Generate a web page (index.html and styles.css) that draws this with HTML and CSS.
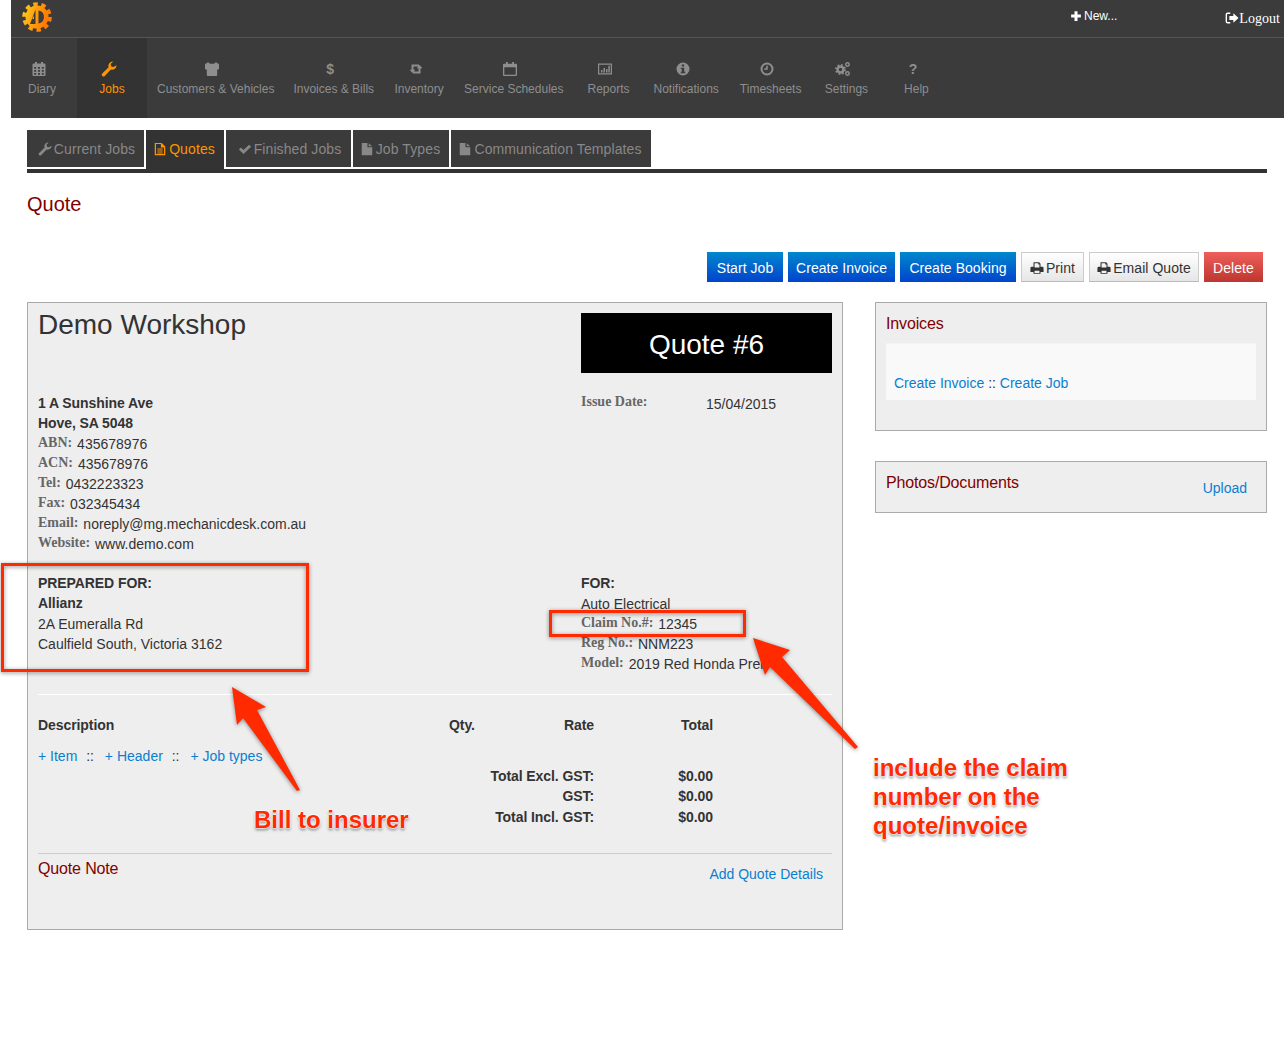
FILE: index.html
```html
<!DOCTYPE html>
<html>
  <head>
    <title>Quote #6</title>
    <meta charset="UTF-8">
    <meta name="viewport" content="width=device-width, initial-scale=1.0">
    <link rel="stylesheet" href="styles.css">
  </head>
  <body>
    <svg class="defs" width="0" height="0">
      <defs>
        <linearGradient id="logo-grad" x1="0" y1="0" x2="1" y2="0.3">
          <stop offset="0" stop-color="#ffc61a"/>
          <stop offset="1" stop-color="#ff7a00"/>
        </linearGradient>
        <symbol id="i-calendar" viewBox="0 0 16 16"><path fill="currentColor" fill-rule="evenodd" d="M4 1h2v1.500h4V1h2v1.500h1.500a1 1 0 0 1 1 1V14a1 1 0 0 1-1 1h-11a1 1 0 0 1-1-1V3.500a1 1 0 0 1 1-1H4zM3.200 6v1.800h2V6zm3.800 0v1.800h2V6zm3.800 0v1.800h2V6zM3.200 9v1.800h2V9zm3.800 0v1.800h2V9zm3.800 0v1.800h2V9zM3.200 12v1.800h2V12zm3.800 0v1.800h2V12zm3.800 0v1.800h2V12z"/></symbol>
        <symbol id="i-wrench" viewBox="0 0 16 16"><path fill="currentColor" d="M15.500 4.200a4.300 4.300 0 0 1-5.600 4.300L3.800 14.900a1.700 1.700 0 0 1-2.500-2.400L7.600 6.200A4.300 4.300 0 0 1 12.200.6L9.700 3.100l.6 2.300 2.300.6z"/></symbol>
        <symbol id="i-users" viewBox="0 0 16 16"><path fill="currentColor" d="M3.500 1.500a2 2 0 0 1 2.300 1.200h4.400a2 2 0 0 1 2.300-1.200l2.500 1.700V8l-1.800.8V14a1 1 0 0 1-1 1H3.800a1 1 0 0 1-1-1V8.800L1 8V3.200z"/></symbol>
        <symbol id="i-retweet" viewBox="0 0 16 16"><path fill="currentColor" d="M3.500 3.500H11v2H5.500v3.200h1.800L4.500 12 1.500 8.700h2zM12.500 12.500H5v-2h5.500V7.300H8.700L11.500 4l3 3.300h-2z"/></symbol>
        <symbol id="i-schedule" viewBox="0 0 16 16"><path fill="currentColor" fill-rule="evenodd" d="M4 1h1.800v1.800h4.400V1H12v1.800h2a1 1 0 0 1 1 1V14a1 1 0 0 1-1 1H2a1 1 0 0 1-1-1V3.800a1 1 0 0 1 1-1h2zM2.300 6.300v7.400h11.400V6.300z"/></symbol>
        <symbol id="i-chart" viewBox="0 0 16 16"><path fill="currentColor" fill-rule="evenodd" d="M1 2.500h14v11H1zm1.200 1.200v8.600h11.600V3.700zM4 9h1.500v2.500H4zm2.500-2H8v4.500H6.500zM9 8h1.500v3.500H9zm2.300-3.300h1.500v6.800h-1.500z"/></symbol>
        <symbol id="i-info" viewBox="0 0 16 16"><path fill="currentColor" fill-rule="evenodd" d="M8 1.500a6.500 6.500 0 1 1 0 13 6.500 6.500 0 0 1 0-13zM6.800 3.500v2h2.400v-2zM5.800 6.700v1.400h1v2.700h-1v1.500h4.400v-1.500h-1V6.700z"/></symbol>
        <symbol id="i-clock" viewBox="0 0 16 16"><path fill="currentColor" fill-rule="evenodd" d="M8 1.500a6.500 6.500 0 1 1 0 13 6.500 6.500 0 0 1 0-13zm0 2a4.500 4.500 0 1 0 0 9 4.500 4.500 0 0 0 0-9zM7.200 4.800h1.600v3.900H5.200V7.300h2z"/></symbol>
        <symbol id="i-cogs" viewBox="0 0 16 16"><g fill="none" stroke="currentColor"><circle cx="5.500" cy="8.500" r="3" stroke-width="2.500"/><circle cx="5.500" cy="8.500" r="4.700" stroke-width="1.500" stroke-dasharray="1.800 1.900"/><circle cx="12.500" cy="3.500" r="1.700" stroke-width="1.500"/><circle cx="12.500" cy="12.500" r="1.700" stroke-width="1.500"/></g></symbol>
        <symbol id="i-quote" viewBox="0 0 16 16"><path fill="currentColor" fill-rule="evenodd" d="M2 1h8l4 4v10H2zm1.400 1.400v11.200h9.200V6.200H9V2.400zM5 7.500h6v1.200H5zm0 2.200h6v1.200H5zm0 2.200h6v1.200H5z"/></symbol>
        <symbol id="i-check" viewBox="0 0 16 16"><path fill="currentColor" d="M1 8.500l2.300-2.300 3 3L12.700 3 15 5.300l-8.700 8.500z"/></symbol>
        <symbol id="i-file" viewBox="0 0 16 16"><path fill="currentColor" d="M2 1h6.500v5H14v9H2zm8 .3L13.700 4.800H10z"/></symbol>
        <symbol id="i-plus" viewBox="0 0 16 16"><path fill="currentColor" d="M6 1.500h4V6h4.500v4H10v4.500H6V10H1.500V6H6z"/></symbol>
        <symbol id="i-logout" viewBox="0 0 16 16"><path fill="none" stroke="currentColor" stroke-width="1.600" d="M6 2.500H3a1.500 1.500 0 0 0-1.500 1.500v8A1.500 1.500 0 0 0 3 13.500h3"/><path fill="currentColor" d="M5 5.800h4.500V2.500L15.500 8l-6 5.500v-3.300H5z"/></symbol>
        <symbol id="i-print" viewBox="0 0 16 16"><path fill="currentColor" fill-rule="evenodd" d="M4 1.500h6.500L12 3v3.500h2a1.500 1.500 0 0 1 1.500 1.500v4.500H12v2H4v-2H.5V8A1.500 1.500 0 0 1 2 6.500h2zm1.200 1.200v4.800h5.600V4H9.500V2.700zm0 8.300v2.800h5.600V11z"/></symbol>
      </defs>
    </svg>

    <header class="topbar">
      <div class="topbar-row">
        <svg class="logo" width="30" height="30" viewBox="0 0 30 30">
          <circle cx="15" cy="15" r="12.800" fill="none" stroke="url(#logo-grad)" stroke-width="4" stroke-dasharray="4.400 3.640"/>
          <circle cx="15" cy="15" r="11.500" fill="url(#logo-grad)"/>
          <path fill="#3b3b3b" fill-rule="evenodd" d="M13.500 7.500L8 22h5.500zM12 13.500v3.500h-1.800z"/>
          <path fill="#3b3b3b" d="M16.500 8.500a6.600 6.600 0 0 1 0 13z"/>
        </svg>
        <a class="top-new"><svg class="icon"><use href="#i-plus"/></svg>New...</a>
        <a class="top-logout"><svg class="icon"><use href="#i-logout"/></svg>Logout</a>
      </div>
      <nav class="mainnav">
        <a class="navitem first"><svg class="nav-icon"><use href="#i-calendar"/></svg><span>Diary</span></a>
        <a class="navitem active"><svg class="nav-icon"><use href="#i-wrench"/></svg><span>Jobs</span></a>
        <a class="navitem tight"><svg class="nav-icon"><use href="#i-users"/></svg><span>Customers &amp; Vehicles</span></a>
        <a class="navitem"><b class="nav-glyph">$</b><span>Invoices &amp; Bills</span></a>
        <a class="navitem"><svg class="nav-icon"><use href="#i-retweet"/></svg><span>Inventory</span></a>
        <a class="navitem"><svg class="nav-icon"><use href="#i-schedule"/></svg><span>Service Schedules</span></a>
        <a class="navitem"><svg class="nav-icon"><use href="#i-chart"/></svg><span>Reports</span></a>
        <a class="navitem wide"><svg class="nav-icon"><use href="#i-info"/></svg><span>Notifications</span></a>
        <a class="navitem"><svg class="nav-icon"><use href="#i-clock"/></svg><span>Timesheets</span></a>
        <a class="navitem"><svg class="nav-icon"><use href="#i-cogs"/></svg><span>Settings</span></a>
        <a class="navitem"><b class="nav-glyph">?</b><span>Help</span></a>
      </nav>
    </header>

    <main class="page">
      <div class="tabs">
        <a class="tab tab-1"><svg class="icon"><use href="#i-wrench"/></svg>Current Jobs</a>
        <a class="tab tab-2 active"><svg class="icon"><use href="#i-quote"/></svg>Quotes</a>
        <a class="tab tab-3"><svg class="icon"><use href="#i-check"/></svg>Finished Jobs</a>
        <a class="tab tab-4"><svg class="icon"><use href="#i-file"/></svg>Job Types</a>
        <a class="tab tab-5"><svg class="icon"><use href="#i-file"/></svg>Communication Templates</a>
      </div>

      <h2 class="page-title">Quote</h2>

      <div class="actions">
        <a class="btn btn-primary">Start Job</a>
        <a class="btn btn-primary">Create Invoice</a>
        <a class="btn btn-primary">Create Booking</a>
        <a class="btn"><svg class="icon"><use href="#i-print"/></svg>Print</a>
        <a class="btn"><svg class="icon"><use href="#i-print"/></svg>Email Quote</a>
        <a class="btn btn-danger">Delete</a>
      </div>

      <div class="columns">
        <section class="quote">
          <div class="quote-head">
            <h1 class="workshop">Demo Workshop</h1>
            <div class="quote-number">Quote #6</div>
          </div>

          <div class="quote-info">
            <div class="lines">
              <div class="strong">1 A Sunshine Ave</div>
              <div class="strong">Hove, SA 5048</div>
              <div><span class="lbl">ABN:</span> 435678976</div>
              <div><span class="lbl">ACN:</span> 435678976</div>
              <div><span class="lbl">Tel:</span> 0432223323</div>
              <div><span class="lbl">Fax:</span> 032345434</div>
              <div><span class="lbl">Email:</span> noreply@mg.mechanicdesk.com.au</div>
              <div><span class="lbl">Website:</span> www.demo.com</div>
            </div>
            <div class="lines">
              <div class="issue"><span class="lbl">Issue Date:</span><span>15/04/2015</span></div>
            </div>
          </div>

          <div class="quote-parties">
            <div class="lines">
              <div class="strong">PREPARED FOR:</div>
              <div class="strong">Allianz</div>
              <div>2A Eumeralla Rd</div>
              <div>Caulfield South, Victoria 3162</div>
            </div>
            <div class="lines">
              <div class="strong">FOR:</div>
              <div>Auto Electrical</div>
              <div><span class="lbl">Claim No.#:</span> 12345</div>
              <div><span class="lbl">Reg No.:</span> NNM223</div>
              <div><span class="lbl">Model:</span> 2019 Red Honda Prel</div>
            </div>
          </div>

          <div class="items">
            <div class="strong">Description</div>
            <div class="strong">Qty.</div>
            <div class="strong num">Rate</div>
            <div class="strong num">Total</div>
            <div class="add-links"><a>+ Item</a> <i>::</i> <a>+ Header</a> <i>::</i> <a>+ Job types</a></div>
            <div class="strong num sum-label">Total Excl. GST:</div>
            <div class="strong num">$0.00</div>
            <div class="strong num sum-label">GST:</div>
            <div class="strong num">$0.00</div>
            <div class="strong num sum-label sum-last">Total Incl. GST:</div>
            <div class="strong num sum-last">$0.00</div>
          </div>

          <div class="quote-note">
            <h3 class="panel-title">Quote Note</h3>
            <a class="note-link">Add Quote Details</a>
          </div>
        </section>

        <aside class="side">
          <section class="panel invoices">
            <h3 class="panel-title">Invoices</h3>
            <div class="panel-body"><a>Create Invoice</a> :: <a>Create Job</a></div>
          </section>
          <section class="panel photos">
            <h3 class="panel-title">Photos/Documents</h3>
            <a class="upload">Upload</a>
          </section>
        </aside>
      </div>
    </main>

    <svg class="marks" width="1284" height="1054" viewBox="0 0 1284 1054">
      <rect x="2.500" y="564.500" width="305" height="106" fill="none" stroke="#ff2a00" stroke-width="3"/>
      <rect x="550.500" y="611.500" width="194" height="24" fill="none" stroke="#ff2a00" stroke-width="3"/>
      <path fill="#ff2a00" d="M232 687L266 707 257 710 300 790 297 791 243 718 237 725z"/>
      <path fill="#ff2a00" d="M753 638L790 650 782 657 858 747 855 749 770 667 765 675z"/>
    </svg>
    <div class="note note-bill">Bill to insurer</div>
    <div class="note note-claim">include the claim<br>number on the<br>quote/invoice</div>
  </body>
</html>
```

FILE: styles.css
```css
* {
  box-sizing: border-box;
  margin: 0;
  padding: 0;
}

body {
  position: relative;
  width: 1284px;
  height: 1054px;
  overflow: hidden;
  font-family: "Liberation Sans", Arial, sans-serif;
  font-size: 14px;
  line-height: 20px;
  color: #333;
  background-color: #fff;
}

.defs {
  position: absolute;
}

.icon {
  width: 14px;
  height: 14px;
  margin-right: 2px;
  vertical-align: -2px;
}

/* top bar */
.topbar {
  margin-left: 11px;
  height: 118px;
  background-color: #3b3b3b;
}

.topbar-row {
  position: relative;
  display: flex;
  height: 38px;
  padding-left: 11px;
  border-bottom: 1px solid #555;
}

.logo {
  margin-top: 2px;
}

.top-new {
  margin-left: 1018px;
  font-size: 12px;
  line-height: 33px;
  color: #fff;
  white-space: nowrap;
}

.top-new .icon {
  width: 12px;
  height: 12px;
  vertical-align: -2px;
}

.top-logout {
  margin-left: 108px;
  font-family: "Liberation Serif", serif;
  font-size: 14px;
  line-height: 38px;
  color: #fff;
  white-space: nowrap;
}

.top-logout .icon {
  width: 14px;
  height: 14px;
  margin-right: 0;
}

.mainnav {
  display: flex;
  height: 80px;
}

.navitem {
  display: flex;
  flex-direction: column;
  align-items: center;
  min-width: 70px;
  padding: 23px 10px 0;
  font-size: 12px;
  color: #8e8e8e;
  white-space: nowrap;
}

.navitem.first {
  margin-left: -4px;
}

.navitem.tight {
  padding-right: 9px;
}

.navitem.wide {
  padding-right: 11px;
}

.navitem.active {
  background-color: #333;
  color: #ff9400;
}

.nav-icon {
  width: 16px;
  height: 16px;
  margin: 0 7px 2px 0;
}

.nav-glyph {
  height: 16px;
  margin: 0 7px 2px 0;
  font-size: 14px;
  line-height: 16px;
}

/* page */
.page {
  padding: 12px 17px 0 27px;
}

.tabs {
  display: flex;
  gap: 2px;
  height: 43px;
  border-bottom: 4px solid #333;
}

.tab {
  height: 37px;
  background-color: #3b3b3b;
  font-size: 14px;
  letter-spacing: 0.1px;
  line-height: 38px;
  text-align: center;
  color: #888;
  white-space: nowrap;
}

.tab-1 { width: 117px; padding-left: 2px; }
.tab-2 { width: 78px; padding-right: 2px; }
.tab-3 { width: 125px; padding-left: 2px; }
.tab-4 { width: 96px; padding-right: 2px; }
.tab-5 { width: 200px; padding-right: 2px; }

.tab.active {
  height: 39px;
  margin-bottom: -2px;
  background-color: #333;
  color: #ff9400;
}

.page-title {
  margin-top: 18px;
  font-size: 20px;
  font-weight: normal;
  line-height: 26px;
  color: #800000;
}

.actions {
  display: grid;
  grid-template-columns: 76px 107px 116px 63px 110px 59px;
  justify-content: end;
  gap: 5px;
  margin-top: 35px;
  padding-right: 4px;
}

.btn {
  height: 30px;
  border: 1px solid #ccc;
  border-bottom-color: #bbb;
  background: linear-gradient(#fff, #e6e6e6);
  font-size: 14px;
  letter-spacing: 0.05px;
  line-height: 31px;
  text-align: center;
  color: #333;
  white-space: nowrap;
}

.btn-primary {
  border: none;
  background: linear-gradient(#0088cc, #0044cc);
  line-height: 33px;
  color: #fff;
}

.btn-danger {
  border: none;
  background: linear-gradient(#ee5f5b, #bd362f);
  line-height: 33px;
  color: #fff;
}

.columns {
  display: flex;
  justify-content: space-between;
  align-items: flex-start;
  margin-top: 20px;
}

/* quote */
.quote {
  width: 816px;
  height: 628px;
  padding: 10px;
  border: 1px solid #aaa;
  background-color: #eee;
}

.quote-head {
  display: grid;
  grid-template-columns: 543px 251px;
  height: 60px;
}

.workshop {
  font-size: 28px;
  font-weight: normal;
  line-height: 24px;
}

.quote-number {
  height: 60px;
  background-color: #000;
  font-size: 28px;
  line-height: 63px;
  text-align: center;
  color: #fff;
}

.quote-info,
.quote-parties {
  display: grid;
  grid-template-columns: 543px 251px;
  margin-top: 20px;
}

.quote-info {
  height: 160px;
}

.quote-parties {
  padding-bottom: 21px;
  border-bottom: 1px solid #fff;
}

.lines > div {
  height: 20px;
  line-height: 22px;
}

.lines > .strong {
  line-height: 20px;
}

.strong {
  font-weight: bold;
  letter-spacing: -0.08px;
}

.lbl {
  position: relative;
  top: -2px;
  margin-right: 1px;
  font-family: "Liberation Serif", serif;
  font-weight: bold;
  color: #666;
}

.issue {
  display: grid;
  grid-template-columns: 125px 1fr;
}

/* items table */
.items {
  display: grid;
  grid-template-columns: 411px 60px 85px 119px;
  margin-top: 20px;
}

.num {
  text-align: right;
}

.add-links {
  grid-column: 1 / 5;
  margin-top: 11px;
}

.add-links a,
.panel-body a,
.note-link,
.upload {
  color: #0a7fd0;
}

.add-links i {
  margin: 0 7px 0 5px;
  font-style: normal;
}

.sum-label {
  grid-column: 1 / 4;
}

.sum-last {
  margin-top: 1px;
}

.quote-note {
  display: flex;
  justify-content: space-between;
  margin-top: 26px;
  padding: 5px 9px 0 0;
  border-top: 1px solid #ccc;
}

.panel-title {
  font-size: 16px;
  font-weight: normal;
  letter-spacing: -0.15px;
  color: #800000;
}

.note-link {
  margin-top: 5px;
}

/* right column */
.side {
  display: flex;
  flex-direction: column;
  gap: 30px;
  width: 392px;
}

.panel {
  padding: 11px 10px 0;
  border: 1px solid #aaa;
  background-color: #eee;
}

.invoices {
  height: 129px;
}

.photos {
  display: flex;
  justify-content: space-between;
  height: 52px;
  padding-right: 19px;
}

.panel-body {
  height: 57px;
  margin-top: 9px;
  padding: 29px 8px 0;
  border-top: 1px solid #f4f4f4;
  background-color: #f9f9f9;
}

.upload {
  margin-top: 5px;
}

/* annotations over the screenshot */
.marks {
  position: absolute;
  left: 0;
  top: 0;
  filter: drop-shadow(0 1px 2px rgba(0, 0, 0, 0.45));
}

.note {
  position: absolute;
  font-size: 24px;
  font-weight: bold;
  line-height: 29px;
  color: #ff2a00;
  white-space: nowrap;
  text-shadow: 0 0 2px #fff, 0 0 2px #fff, 0 0 2px #fff, 0 2px 3px rgba(0, 0, 0, 0.5);
}

.note-bill {
  left: 254px;
  top: 805px;
}

.note-claim {
  left: 873px;
  top: 753px;
}
```
